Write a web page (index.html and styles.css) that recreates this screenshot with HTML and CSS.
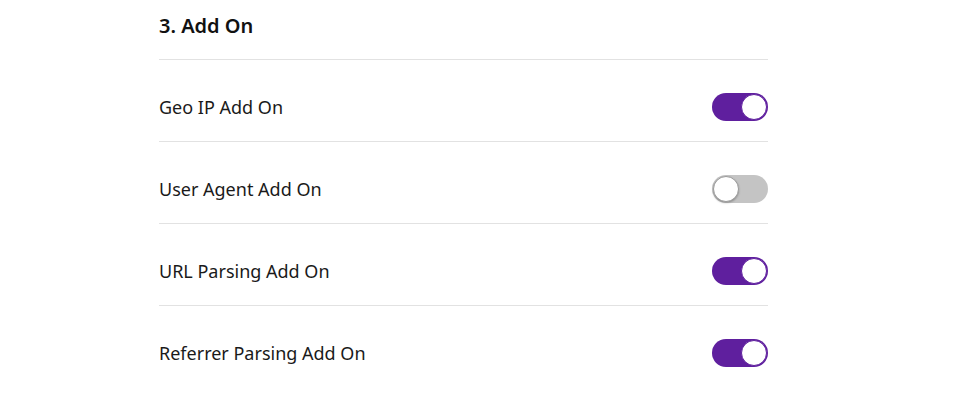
FILE: index.html
```html
<!DOCTYPE html>
<html>
<head>
<meta charset="utf-8">
<link rel="stylesheet" href="styles.css">
</head>
<body>
<section class="panel">
  <h2 class="title">3. Add On</h2>
  <div class="row">
    <span class="label">Geo IP Add On</span>
    <span class="toggle on"><span class="knob"></span></span>
  </div>
  <div class="row">
    <span class="label">User Agent Add On</span>
    <span class="toggle"><span class="knob"></span></span>
  </div>
  <div class="row">
    <span class="label">URL Parsing Add On</span>
    <span class="toggle on"><span class="knob"></span></span>
  </div>
  <div class="row last">
    <span class="label">Referrer Parsing Add On</span>
    <span class="toggle on"><span class="knob"></span></span>
  </div>
</section>
</body>
</html>
```
FILE: styles.css
```css
html, body {
  margin: 0;
  padding: 0;
  background: #ffffff;
}
body {
  font-family: "Noto Sans", "Open Sans", sans-serif;
  color: #1a1a1a;
}
.panel {
  width: 609px;
  margin-left: 159px;
}
.title {
  margin: 0;
  font-size: 20px;
  line-height: 28px;
  font-weight: 600;
  padding: 12px 0 19px;
  border-bottom: 1px solid #e2e2e2;
  color: #111;
}
.row {
  display: flex;
  align-items: center;
  justify-content: space-between;
  padding: 33px 0 20px;
  border-bottom: 1px solid #e2e2e2;
}
.row.last {
  border-bottom: none;
}
.label {
  font-size: 18px;
  line-height: 28px;
  color: #1a1a1a;
}
.toggle {
  position: relative;
  display: block;
  width: 56px;
  height: 28px;
  border-radius: 14px;
  background: #c4c4c4;
}
.toggle.on {
  background: #5f1f9e;
}
.knob {
  position: absolute;
  top: 1px;
  left: 1px;
  width: 24px;
  height: 24px;
  border-radius: 50%;
  background: #fff;
  border: 1px solid #9a9a9a;
  box-shadow: 0 1px 2px rgba(0,0,0,0.25);
}
.toggle.on .knob {
  left: auto;
  right: 1px;
  border-color: #5f1f9e;
  box-shadow: none;
}
```
